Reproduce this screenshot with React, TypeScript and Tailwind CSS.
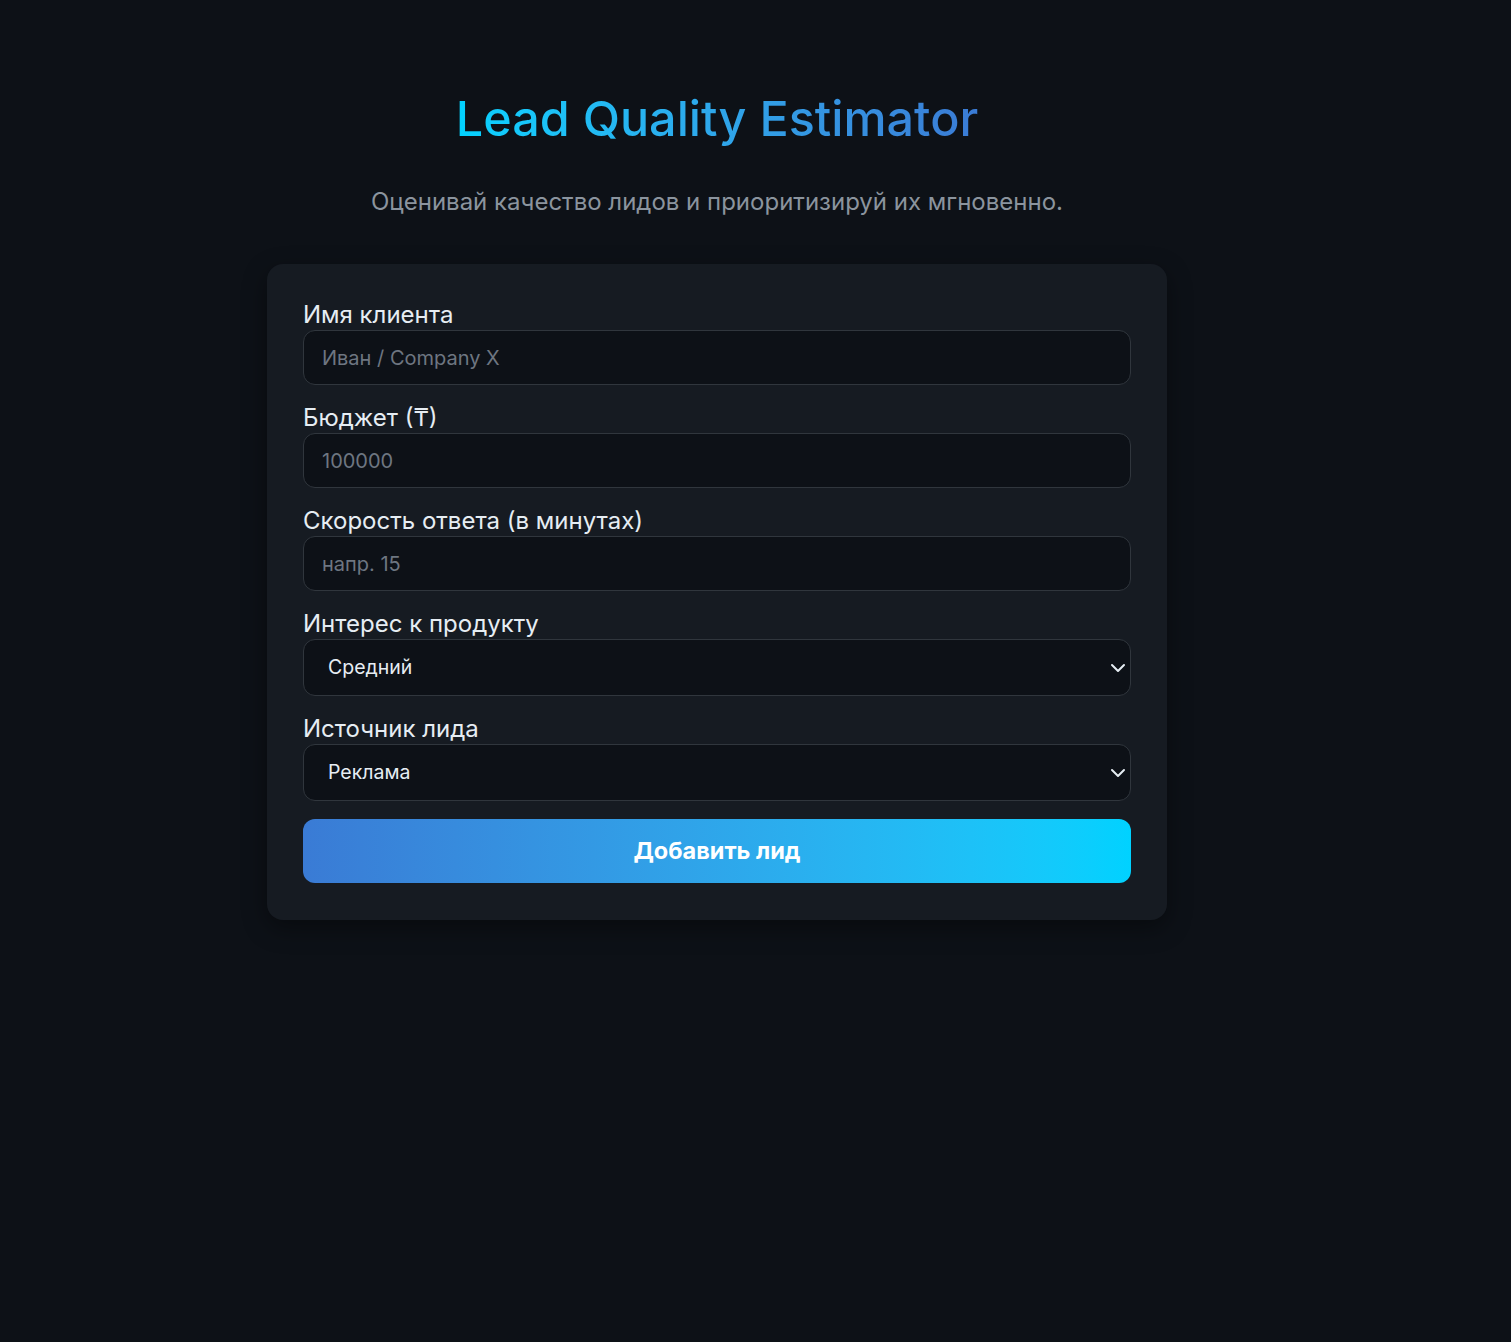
import { ChevronDown } from 'lucide-react'

const inputCls =
  'w-full h-[55px] rounded-xl border border-[#30363d] bg-[#0d1117] px-[18px] text-[20px] text-[#e6edf3] placeholder:text-[#6e7681] outline-none'

const Field = ({ label, children }) => (
  <div className="mb-[18px]">
    <label className="block text-[24px] leading-[30px] text-[#e6edf3]">{label}</label>
    {children}
  </div>
)

const Select = ({ value }) => (
  <div className="relative">
    <div className="flex h-[57px] w-full items-center rounded-xl border border-[#30363d] bg-[#0d1117] pl-6 text-[19.5px] text-[#e6edf3]">
      {value}
    </div>
    <ChevronDown
      className="absolute right-px top-1/2 -translate-y-1/2 text-[#e6edf3]"
      size={24}
      strokeWidth={2}
    />
  </div>
)

export default function App() {
  return (
    <div
      className="min-h-[1342px] bg-[#0d1117] pr-[77px] pt-[88px]"
      style={{ fontFamily: 'Inter, "Noto Sans", sans-serif' }}
    >
      <div className="mx-auto w-[900px]">
        <div className="flex justify-center">
          <h1 className="bg-gradient-to-r from-[#00d2ff] to-[#3a7bd5] bg-clip-text text-[48.5px] font-medium leading-[62px] text-transparent">
            Lead Quality Estimator
          </h1>
        </div>
        <p className="mt-[38px] text-center text-[24px] leading-[28px] text-[#8b949e]">
          Оценивай качество лидов и приоритизируй их мгновенно.
        </p>

        <div className="mt-[48px] rounded-2xl bg-[#161b22] px-9 pb-[37px] pt-[36px] shadow-[0_8px_24px_rgba(0,0,0,0.4)]">
          <Field label="Имя клиента">
            <input className={inputCls} placeholder="Иван / Company X" />
          </Field>
          <Field label="Бюджет (₸)">
            <input className={inputCls} placeholder="100000" />
          </Field>
          <Field label="Скорость ответа (в минутах)">
            <input className={inputCls} placeholder="напр. 15" />
          </Field>
          <Field label="Интерес к продукту">
            <Select value="Средний" />
          </Field>
          <Field label="Источник лида">
            <Select value="Реклама" />
          </Field>
          <button className="h-[64px] w-full rounded-xl bg-gradient-to-r from-[#3a7bd5] to-[#00d2ff] text-[23.5px] font-bold text-white">
            Добавить лид
          </button>
        </div>
      </div>
    </div>
  )
}
